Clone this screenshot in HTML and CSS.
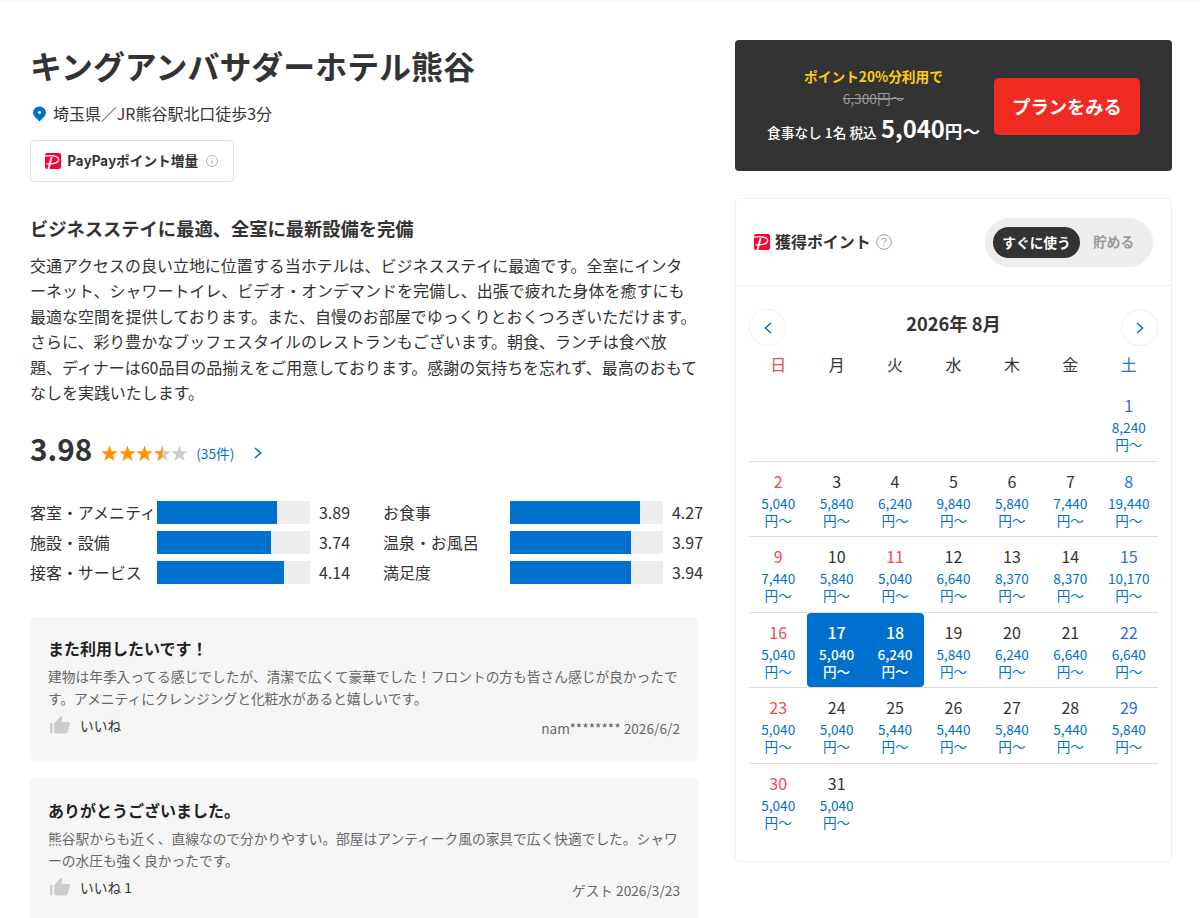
FILE: index.html
```html
<!DOCTYPE html>
<html lang="ja">
<head>
    <meta charset="UTF-8">
    <meta name="viewport" content="width=device-width, initial-scale=1.0">
    <title>キングアンバサダーホテル熊谷</title>
    <link rel="stylesheet" href="styles.css">
</head>
<body>
<!-- 共通アイコン -->
<svg class="defs" width="0" height="0">
    <symbol id="paypay" viewBox="0 0 16 16">
        <rect width="16" height="16" rx="2" fill="#f03"/>
        <path d="M0 3.200C6 2.200 13.800 2.600 13.600 6.600 13.400 10.200 8 11 1.500 10.800" fill="none" stroke="#fff" stroke-width="1.300"/>
        <path d="M6.600 4.200 3.400 16" fill="none" stroke="#fff" stroke-width="1.900"/>
    </symbol>
    <symbol id="star" viewBox="0 0 24 24">
        <path d="M12 .5l2.900 8.200 8.900.2-7 5.300 2.500 8.500L12 17.700l-7.300 5 2.500-8.500-7-5.300 8.900-.2z"/>
    </symbol>
    <symbol id="good" viewBox="0 0 24 24">
        <path d="M1 10.500a1.500 1.500 0 0 1 3 0v9a1.500 1.500 0 0 1-3 0zM6 9.500 12.600 2c1.200-1.400 3.100-.2 2.700 1.500L14.500 8H22a2 2 0 0 1 1.900 2.500l-2.400 8.500a2.600 2.600 0 0 1-2.500 2H8a2 2 0 0 1-2-2z"/>
    </symbol>
</svg>

<div class="page">
    <main class="hotel">
        <h1>キングアンバサダーホテル熊谷</h1>
        <p class="address">
            <svg width="13" height="16" viewBox="0 0 12 16" preserveAspectRatio="none"><path d="M6 .5a6 6 0 0 1 6 6C12 10 8.500 12.500 6 15.500 3.500 12.500 0 10 0 6.500a6 6 0 0 1 6-6z" fill="#0070cf"/><circle cx="6" cy="6.500" r="1.400" fill="#fff"/></svg>
            埼玉県／JR熊谷駅北口徒歩3分
        </p>
        <div class="campaign">
            <svg width="16" height="16"><use href="#paypay"/></svg>
            <span>PayPayポイント増量</span>
            <svg width="12" height="12" viewBox="0 0 12 12" fill="none" stroke="#aaa"><circle cx="6" cy="6" r="5.500" stroke-width=".9"/><path d="M6 5v4M6 3v1"/></svg>
        </div>

        <h2>ビジネスステイに最適、全室に最新設備を完備</h2>
        <p class="description">
            交通アクセスの良い立地に位置する当ホテルは、ビジネスステイに最適です。全室にインタ<br>
            ーネット、シャワートイレ、ビデオ・オンデマンドを完備し、出張で疲れた身体を癒すにも<br>
            最適な空間を提供しております。また、自慢のお部屋でゆっくりとおくつろぎいただけます。<br>
            さらに、彩り豊かなブッフェスタイルのレストランもございます。朝食、ランチは食べ放<br>
            題、ディナーは60品目の品揃えをご用意しております。感謝の気持ちを忘れず、最高のおもて<br>
            なしを実践いたします。
        </p>

        <div class="score">
            <strong>3.98</strong>
            <span class="stars">
                <svg><use href="#star"/></svg><svg><use href="#star"/></svg><svg><use href="#star"/></svg><svg class="off"><use href="#star"/></svg><svg class="off"><use href="#star"/></svg>
                <svg class="half"><use href="#star"/></svg>
            </span>
            <a href="#">(35件)</a>
            <svg class="arrow" width="8" height="12" viewBox="0 0 8 12"><path d="M1 1l5.500 5L1 11"/></svg>
        </div>

        <div class="ratings">
            <div class="rating"><span>客室・アメニティ</span><div class="bar"><i style="width:78.5%"></i></div>3.89</div>
            <div class="rating"><span>お食事</span><div class="bar"><i style="width:85%"></i></div>4.27</div>
            <div class="rating"><span>施設・設備</span><div class="bar"><i style="width:74.8%"></i></div>3.74</div>
            <div class="rating"><span>温泉・お風呂</span><div class="bar"><i style="width:78.8%"></i></div>3.97</div>
            <div class="rating"><span>接客・サービス</span><div class="bar"><i style="width:83.3%"></i></div>4.14</div>
            <div class="rating"><span>満足度</span><div class="bar"><i style="width:78.8%"></i></div>3.94</div>
        </div>

        <section class="review">
            <h3>また利用したいです！</h3>
            <p>建物は年季入ってる感じでしたが、清潔で広くて豪華でした！フロントの方も皆さん感じが良かったです。アメニティにクレンジングと化粧水があると嬉しいです。</p>
            <div class="review-foot">
                <span class="like"><svg width="21" height="21"><use href="#good"/></svg>いいね</span>
                <span class="by">nam******** 2026/6/2</span>
            </div>
        </section>
        <section class="review">
            <h3>ありがとうございました。</h3>
            <p>熊谷駅からも近く、直線なので分かりやすい。部屋はアンティーク風の家具で広く快適でした。シャワーの水圧も強く良かったです。</p>
            <div class="review-foot">
                <span class="like"><svg width="21" height="21"><use href="#good"/></svg>いいね 1</span>
                <span class="by">ゲスト 2026/3/23</span>
            </div>
        </section>
    </main>

    <aside class="side">
        <div class="plan">
            <div class="plan-price">
                <p class="point">ポイント20%分利用で</p>
                <p class="before">6,300円～</p>
                <p class="after">食事なし 1名 税込 <b>5,040<small>円～</small></b></p>
            </div>
            <button class="plan-button">プランをみる</button>
        </div>

        <div class="calendar">
            <div class="calendar-head">
                <svg width="16" height="16"><use href="#paypay"/></svg>
                <b>獲得ポイント</b>
                <svg width="16" height="16" viewBox="0 0 16 16" fill="none" stroke="#999"><circle cx="8" cy="8" r="7.300"/><path d="M5.800 6.300C5.900 3.500 10.200 3.600 10.200 6.100 10.200 7.700 8 7.700 8 9.600M8 10.800v1.300"/></svg>
                <div class="switch"><span class="on">すぐに使う</span><span>貯める</span></div>
            </div>
            <div class="calendar-body">
                <div class="month">
                    <button><svg class="arrow" width="8" height="12" viewBox="0 0 8 12"><path d="M7 1L1.500 6 7 11"/></svg></button>
                    <b>2026年 8月</b>
                    <button><svg class="arrow" width="8" height="12" viewBox="0 0 8 12"><path d="M1 1l5.500 5L1 11"/></svg></button>
                </div>
                <table>
                    <thead>
                        <tr><th>日</th><th>月</th><th>火</th><th>水</th><th>木</th><th>金</th><th>土</th></tr>
                    </thead>
                    <tbody id="days"></tbody>
                </table>
            </div>
        </div>
    </aside>
</div>

<script>
    // 1日〜31日の最安値
    const prices = [
        8240,
        5040, 5840, 6240, 9840, 5840, 7440, 19440,
        7440, 5840, 5040, 6640, 8370, 8370, 10170,
        5040, 5040, 6240, 5840, 6240, 6640, 6640,
        5040, 5040, 5440, 5440, 5840, 5440, 5840,
        5040, 5040
    ];
    const holidays = [11];
    const checkin = 17;
    const checkout = 18;
    const firstDay = 6; // 2026/8/1は土曜日

    let html = "";
    for (let i = 0; i < 42; i++) {
        const day = i - firstDay + 1;
        if (i % 7 === 0) html += "<tr>";
        if (day < 1 || day > prices.length) {
            html += "<td></td>";
        } else {
            const cls = [];
            if (holidays.includes(day)) cls.push("holiday");
            if (day >= checkin && day <= checkout) cls.push("selected");
            if (day === checkin) cls.push("start");
            if (day === checkout) cls.push("end");
            html += `<td class="${cls.join(" ")}"><div class="day">${day}</div><div class="price">${prices[day - 1].toLocaleString("en-US")}<br>円～</div></td>`;
        }
        if (i % 7 === 6) html += "</tr>";
    }
    document.getElementById("days").innerHTML = html;
</script>
</body>
</html>
```
FILE: styles.css
```css
* { box-sizing: border-box; }
body { margin: 0; color: #333; background: #fff; font-family: "Noto Sans CJK JP", sans-serif; font-size: 16px; line-height: 1.6; overflow: hidden; }
h1, h2, h3, p { margin: 0; }
button { font-family: inherit; cursor: pointer; }
svg { flex: none; }
.defs { position: absolute; }
.page { display: flex; align-items: flex-start; gap: 37px; height: 918px; padding: 38px 28px 0 30px; border-top: 2px solid #f9f9f9; overflow: hidden; }
.arrow { fill: none; stroke: #0070cf; stroke-width: 1.6; }

/* ホテル情報 */
.hotel { width: 668px; padding-top: 1px; }
h1 { font-size: 31.95px; line-height: 48px; }
.address { display: flex; align-items: center; gap: 7px; margin-top: 12px; padding-left: 3px; font-size: 15.96px; }
.campaign { display: flex; align-items: center; gap: 6px; width: 204px; height: 42px; margin-top: 13px; padding-left: 14px; border: 1px solid #ddd; border-radius: 4px; font-size: 13.7px; font-weight: bold; }
.campaign span { margin-right: 2px; }
h2 { margin-top: 31px; font-size: 18.28px; line-height: 30px; }
.description { margin-top: 10px; font-size: 15.98px; line-height: 25.6px; white-space: nowrap; }

.score { display: flex; align-items: center; margin-top: 20px; height: 48px; }
.score strong { font-size: 29.7px; line-height: 46px; padding-bottom: 2px; }
.stars { position: relative; display: flex; gap: .5px; margin: 7px 7px 0 9px; }
.stars svg { width: 17px; height: 17px; fill: #ff9300; }
.stars .off { fill: #ccc; }
.stars .half { position: absolute; left: 52.5px; top: 0; clip-path: inset(0 50% 0 0); }
.score a { margin: 8px 20px 0 1px; color: #0070cf; font-size: 13.7px; text-decoration: none; }
.score .arrow { margin-top: 6px; }

.ratings { display: grid; grid-template-columns: 353px 353px; row-gap: 7.400px; margin-top: 27px; font-size: 15.96px; }
.rating { display: flex; align-items: center; height: 22.800px; white-space: nowrap; }
.rating span { width: 127px; }
.bar { width: 153px; height: 100%; margin-right: 9px; background: #ededed; }
.bar i { display: block; height: 100%; background: #0070cf; }

.review { height: 144px; margin-bottom: 18px; padding: 18px 18px 0; border-radius: 4px; background: #f6f6f6; }
.ratings + .review { margin-top: 33px; }
.review h3 { font-size: 16px; line-height: 26px; color: #222; }
.review p { margin: 4px -2px 0 0; color: #666; font-size: 13.72px; line-height: 22px; }
.review-foot { display: flex; justify-content: space-between; font-size: 13.7px; line-height: 22px; }
.like { display: flex; gap: 10px; padding: 5px 0 0 1px; }
.like svg { margin-top: 1px; fill: #ccc; }
.by { padding-top: 8px; color: #666; }

/* プラン */
.side { width: 437px; }
.plan { display: flex; align-items: center; justify-content: flex-end; gap: 14px; height: 131px; padding: 1px 32px 0 0; border-radius: 4px; background: #333; color: #fff; }
.plan-price { padding-top: 3px; text-align: center; white-space: nowrap; }
.point { color: #fc1; font-size: 13.7px; font-weight: bold; line-height: 22px; }
.before { color: #999; font-size: 13.7px; line-height: 22px; text-decoration: line-through; }
.after { font-size: 13.7px; font-weight: 500; line-height: 38px; }
.after b { margin-left: 1px; font-size: 23.8px; }
.after small { font-size: 17.6px; }
.plan-button { width: 146px; height: 57px; border: 0; border-radius: 5px; background: #ef2b24; color: #fff; font-size: 18.28px; font-weight: bold; }

/* カレンダー */
.calendar { height: 664px; margin-top: 27px; border: 1px solid #eee; border-radius: 5px; }
.calendar-head { display: flex; align-items: center; height: 87px; padding: 0 18px; border-bottom: 1px solid #eee; }
.calendar-head b { margin: 0 5px 0 5px; font-size: 15.96px; }
.switch { display: flex; align-items: center; width: 168px; height: 49px; margin-left: auto; padding-left: 8px; border-radius: 25px; background: #ededed; color: #999; font-size: 13.7px; font-weight: bold; }
.switch .on { width: 87px; height: 31px; margin-right: 13px; border-radius: 16px; background: #333; color: #fff; line-height: 31px; text-align: center; }
.calendar-body { padding: 23px 13px 0; }
.month { display: flex; justify-content: space-between; height: 37px; }
.month b { font-size: 18.28px; line-height: 28px; }
.month button { display: flex; align-items: center; justify-content: center; width: 37px; height: 37px; padding: 0; border: 1px solid #eee; border-radius: 50%; background: #fff; }
table { width: 100%; table-layout: fixed; border-collapse: separate; border-spacing: 0; text-align: center; }
th { height: 39px; padding: 0 0 1px; font-weight: normal; }
td { height: 75.500px; padding: 7px 0 0; vertical-align: top; }
tbody tr + tr td { padding-top: 6px; border-top: 1px solid #ddd; }
th:first-child, td:first-child, .holiday { color: #f04b50; }
th:last-child, td:last-child { color: #2a70e0; }
.day { line-height: 26px; }
.price { margin-top: 1px; color: #0070cf; font-size: 13.6px; line-height: 17px; }
.selected { background: #0070cf; background-clip: padding-box; color: #fff; font-weight: 500; }
.selected .price { color: #fff; }
.start { border-radius: 4px 0 0 4px; }
.end { border-radius: 0 4px 4px 0; }
```
